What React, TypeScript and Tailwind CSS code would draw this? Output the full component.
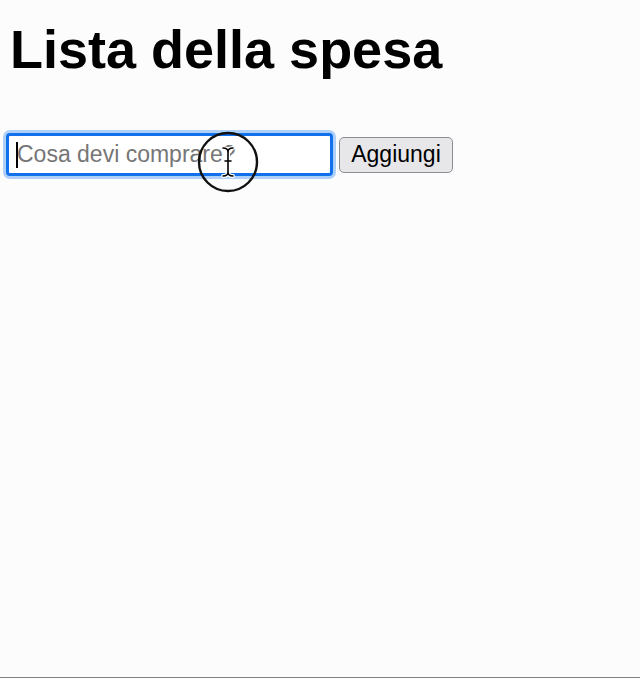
import React, { useState } from 'react';

const FONT = "font-['Liberation_Sans',Arial,sans-serif]";

export default function App() {
    const [item, setItem] = useState('');

    return (
        <div className={`relative h-[678px] w-[640px] overflow-hidden bg-[#fcfcfc] border-b border-[#7f7f7f] px-[6px] ${FONT}`}>
            <h1 className="mt-[18px] text-[54px] leading-[62px] font-bold text-black pl-[4px]">Lista della spesa</h1>

            {/* Form row */}
            <div className="mt-[53px] flex items-center gap-[6px]">
                <div className="relative">
                    <input
                        value={item}
                        onChange={(e) => setItem(e.target.value)}
                        placeholder="Cosa devi comprare?"
                        className="block w-[327px] h-[43px] rounded-[4px] border-[3px] border-[#1170ec] bg-white pl-[8px] text-[23px] text-black outline-none shadow-[0_0_0_3px_#aecff7] placeholder:text-[#767676]"
                    />
                    {/* text caret */}
                    <div className="absolute left-[10px] top-[9px] w-[2px] h-[26px] bg-black" />
                </div>
                <button className="h-[36px] w-[114px] rounded-[5px] border-[1.5px] border-[#8d8d95] bg-[#e7e7ea] text-[23px] leading-none text-black">
                    Aggiungi
                </button>
            </div>

            {/* click highlight + I-beam */}
            <svg className="absolute left-[197px] top-[131px] pointer-events-none" width="62" height="62" viewBox="0 0 62 62">
                <circle cx="31" cy="31" r="29" fill="none" stroke="#111" strokeWidth="2.4" />
                <path
                    d="M26 17 Q31 17 31 21 Q31 17 36 17 M31 21 L31 41 M26 45 Q31 45 31 41 Q31 45 36 45 M28 30 L34 30"
                    fill="none"
                    stroke="#fff"
                    strokeWidth="4"
                    strokeLinecap="round"
                />
                <path
                    d="M26 17 Q31 17 31 21 Q31 17 36 17 M31 21 L31 41 M26 45 Q31 45 31 41 Q31 45 36 45 M28 30 L34 30"
                    fill="none"
                    stroke="#000"
                    strokeWidth="1.6"
                    strokeLinecap="round"
                />
            </svg>
        </div>
    );
}
